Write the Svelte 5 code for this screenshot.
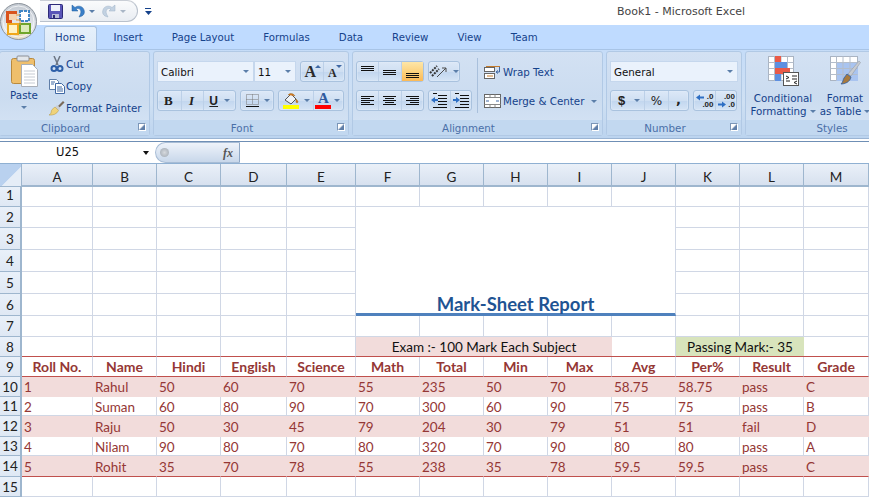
<script>
	const tabs = ['Home', 'Insert', 'Page Layout', 'Formulas', 'Data', 'Review', 'View', 'Team'];
	const columns = ['A', 'B', 'C', 'D', 'E', 'F', 'G', 'H', 'I', 'J', 'K', 'L', 'M'];
	const headings = ['Roll No.', 'Name', 'Hindi', 'English', 'Science', 'Math', 'Total', 'Min', 'Max', 'Avg', 'Per%', 'Result', 'Grade'];
	const students = [
		[1, 'Rahul', 50, 60, 70, 55, 235, 50, 70, 58.75, 58.75, 'pass', 'C'],
		[2, 'Suman', 60, 80, 90, 70, 300, 60, 90, 75, 75, 'pass', 'B'],
		[3, 'Raju', 50, 30, 45, 79, 204, 30, 79, 51, 51, 'fail', 'D'],
		[4, 'Nilam', 90, 80, 70, 80, 320, 70, 90, 80, 80, 'pass', 'A'],
		[5, 'Rohit', 35, 70, 78, 55, 238, 35, 78, 59.5, 59.5, 'pass', 'C']
	];
	const blanks = (n) => Array.from({ length: n });

	// x1, x2 for the five lines of each horizontal alignment icon
	const hAlign = [
		[[2, 15], [2, 11], [2, 15], [2, 11], [2, 15]],
		[[2, 15], [4, 13], [2, 15], [4, 13], [2, 15]],
		[[2, 15], [6, 15], [2, 15], [6, 15], [2, 15]]
	];
</script>

{#snippet caret()}
	<i class="caret"></i>
{/snippet}

{#snippet vLines(top)}
	<svg width="17" height="16" viewBox="0 0 17 16">
		{#each [0, 2, 4] as d}
			<path d="M2 {top + d + 0.5}H15" stroke="#111" />
		{/each}
	</svg>
{/snippet}

{#snippet hLines(set)}
	<svg width="17" height="16" viewBox="0 0 17 16">
		{#each set as [a, b], i}
			<path d="M{a} {3.5 + i * 2}H{b}" stroke="#111" />
		{/each}
	</svg>
{/snippet}

<div class="excel">
	<header class="titlebar">
		<svg class="office" width="40" height="40" viewBox="0 0 40 40">
			<defs>
				<radialGradient id="orb" cx="50%" cy="85%" r="75%">
					<stop offset="0" stop-color="#e9d9b4" />
					<stop offset="0.55" stop-color="#e4e8ee" />
					<stop offset="1" stop-color="#c6ccd4" />
				</radialGradient>
			</defs>
			<circle cx="18.5" cy="19.5" r="18" fill="url(#orb)" stroke="#8d949c" />
			<circle cx="18.5" cy="19.5" r="15.5" fill="none" stroke="#fff" stroke-opacity=".7" />
			<path d="M6 9h11v3H9v6h3v3H6z" fill="#d9541e" />
			<path d="M9 12h8v6H9z" fill="#f6d4b0" />
			<rect x="20" y="9" width="9" height="10" fill="#fff" stroke="#3f86c6" stroke-width="2" stroke-dasharray="3 1" />
			<rect x="8" y="22" width="10" height="10" fill="#fff3c4" stroke="#f0a81c" stroke-width="2" />
			<rect x="20" y="22" width="10" height="9" fill="#dcebb8" stroke="#6fa52b" stroke-width="2" />
			<path d="M16 13h4M16 18h4v5" stroke="#e59a3b" fill="none" />
		</svg>
		<div class="qat">
			<svg width="15" height="15" viewBox="0 0 15 15">
				<rect x=".5" y=".5" width="14" height="14" rx="1" fill="#5a55b8" stroke="#2c2a78" />
				<rect x="3" y="1" width="9" height="6" fill="#eef0fa" />
				<rect x="4" y="10" width="7" height="4" fill="#b9bcd8" />
				<rect x="5" y="11" width="2" height="3" fill="#2c2a78" />
			</svg>
			<svg class="undo" width="14" height="14" viewBox="0 0 14 14">
				<path d="M1 1v6h6L5 5c3-1.500 6 .5 4.500 5L8 13c5-1 6-4 5-7C12 2 7 1 4 3.500z" fill="#3a7fc8" stroke="#1f5c9f" stroke-width=".5" />
			</svg>
			{@render caret()}
			<svg class="redo" width="14" height="14" viewBox="0 0 14 14">
				<path d="M13 1v6H7l2-2C6 3.500 3 5.500 4.500 10L6 13C1 12 0 9 1 6c1-4 6-5 9-2.500z" fill="#c3d2e2" stroke="#9db1c7" stroke-width=".5" />
			</svg>
			<i class="caret grey"></i>
		</div>
		<svg class="customize" width="7" height="8" viewBox="0 0 7 8">
			<path d="M0 .5H6" stroke="#15428b" />
			<path d="M0 3h7L3.500 7z" fill="#15428b" />
		</svg>
		<span class="title">Book1 - Microsoft Excel</span>
	</header>

	<nav class="tabs">
		{#each tabs as tab, i}
			<span class="tab" class:active={i === 0}>{tab}</span>
		{/each}
	</nav>

	<div class="ribbon">
		<section class="group clipboard">
			<div class="body clip-body">
				<div class="paste">
					<svg width="28" height="33" viewBox="0 0 28 33">
						<rect x=".5" y="3.500" width="23" height="25" rx="2" fill="#efbf6c" stroke="#b98a3e" />
						<rect x="6" y="1" width="12" height="5" rx="1" fill="#e3e6ea" stroke="#8b8f96" />
						<path d="M10.500 9.500h11l5 5v17h-16z" fill="#fff" stroke="#a9afb8" />
						<path d="M13 16h11M13 19h11M13 22h11M13 25h11M13 28h11" stroke="#c6cbd3" />
					</svg>
					<span>Paste</span>
					{@render caret()}
				</div>
				<div class="small-list">
					<div class="small">
						<svg width="16" height="16" viewBox="0 0 16 16">
							<path d="M5 0l4 9M11 0L7 9" stroke="#6d7684" stroke-width="1.500" fill="none" />
							<circle cx="5" cy="12.500" r="2.500" fill="none" stroke="#2d5fa8" stroke-width="2" />
							<circle cx="11" cy="12.500" r="2.500" fill="none" stroke="#2d5fa8" stroke-width="2" />
						</svg>
						Cut
					</div>
					<div class="small">
						<svg width="16" height="16" viewBox="0 0 16 16">
							<path d="M.5 1.500h7l2 2v8h-9z" fill="#fff" stroke="#5f7ea8" />
							<path d="M6.500 5.500h6l3 3v7h-9z" fill="#fff" stroke="#3f68a4" />
							<path d="M2 4h4M2 6h3M8 9h5M8 11h6M8 13h6" stroke="#3f68a4" />
						</svg>
						Copy
					</div>
					<div class="small">
						<svg width="16" height="16" viewBox="0 0 16 16">
							<path d="M9 6l5-5 1.500 1.500-5 5z" fill="#7a6a58" />
							<path d="M8 5l3.500 3.500-2 2L6 7z" fill="#c9ced6" />
							<path d="M6 7l3.500 3.500C8 14 4 15.500 0 15c2-1 2-2 2.500-4.500C3 9 5 8 6 7z" fill="#f0d37a" stroke="#b2953e" stroke-width=".5" />
						</svg>
						Format Painter
					</div>
				</div>
			</div>
			<footer>Clipboard<i class="launcher"></i></footer>
		</section>

		<section class="group font">
			<div class="body rows">
				<div class="row">
					<div class="combo face"><span>Calibri</span>{@render caret()}</div>
					<div class="combo size"><span>11</span>{@render caret()}</div>
					<div class="btns grow">
						<span class="btn letter big">A<i class="up"></i></span>
						<span class="btn letter little">A<i class="down"></i></span>
					</div>
				</div>
				<div class="row">
					<div class="btns biu">
						<span class="btn serif">B</span>
						<span class="btn serif ital">I</span>
						<span class="btn serif under">U{@render caret()}</span>
					</div>
					<div class="btns borders">
						<span class="btn">
							<svg width="15" height="15" viewBox="0 0 15 15">
								<path d="M1.500 1.500h12v10h-12zM7.500 1.500v10M1.500 6.500h12" fill="none" stroke="#777" stroke-dasharray="1 1" />
								<path d="M1 13.500h13" stroke="#111" />
							</svg>
							{@render caret()}
						</span>
					</div>
					<div class="btns colours">
						<span class="btn fill">
							<svg width="16" height="12" viewBox="0 0 16 12">
								<path d="M2 7l6-6 5 5-5 5z" fill="#eef2f7" stroke="#555" />
								<path d="M5 2c2-2 5-2 7 1M13 6c1 1 2 2 2 3s-2 1-2 0z" fill="#d6791f" stroke="#8f6a2a" stroke-width=".5" />
							</svg>
							<b class="swatch yellow"></b>
							{@render caret()}
						</span>
						<span class="btn colour">
							<span class="letter a">A</span>
							<b class="swatch red"></b>
							{@render caret()}
						</span>
					</div>
				</div>
			</div>
			<footer>Font<i class="launcher"></i></footer>
		</section>

		<section class="group align">
			<div class="body align-body">
				<div class="rows">
					<div class="row">
						<div class="btns cells">
							<span class="btn cell">{@render vLines(2)}</span>
							<span class="btn cell">{@render vLines(6)}</span>
							<span class="btn cell on">{@render vLines(9)}</span>
						</div>
						<div class="btns">
							<span class="btn orient">
								<svg width="20" height="16" viewBox="0 0 20 16">
									<path d="M1 9l7-7M3 12l7-7" stroke="#333" stroke-width="2" stroke-dasharray="2 1" />
									<path d="M8 13l9-9M13 4h4v4" stroke="#4d4d4d" fill="none" />
								</svg>
								{@render caret()}
							</span>
						</div>
					</div>
					<div class="row">
						<div class="btns cells">
							{#each hAlign as set}
								<span class="btn cell">{@render hLines(set)}</span>
							{/each}
						</div>
						<div class="btns indents">
							<span class="btn indent">
								<svg width="18" height="16" viewBox="0 0 18 16">
									<path d="M8 2.500h9M8 5.500h9M8 8.500h9M8 11.500h9M3 .5h4M3 14.500h14" stroke="#111" />
									<path d="M1 7l4-3v2h3v2H5v2z" fill="#2e6fc4" />
								</svg>
							</span>
							<span class="btn indent">
								<svg width="18" height="16" viewBox="0 0 18 16">
									<path d="M8 2.500h9M8 5.500h9M8 8.500h9M8 11.500h9M3 .5h4M3 14.500h14" stroke="#111" />
									<path d="M8 7L4 4v2H1v2h3v2z" fill="#2e6fc4" />
								</svg>
							</span>
						</div>
					</div>
				</div>
				<div class="sep"></div>
				<div class="wrap-list">
					<div class="small">
						<svg width="17" height="16" viewBox="0 0 17 16">
							<rect x=".5" y="3.500" width="10" height="4" fill="#fff" stroke="#666" />
							<rect x=".5" y="9.500" width="10" height="5" fill="#fff" stroke="#666" />
							<path d="M2 2.500h14" stroke="#c57b2b" />
							<path d="M3 12h6" stroke="#c57b2b" />
							<path d="M15.500 3v5h-3M14 6.500l-2 1.500 2 1.500" fill="none" stroke="#3f68a4" />
						</svg>
						Wrap Text
					</div>
					<div class="small">
						<svg width="17" height="16" viewBox="0 0 17 16">
							<rect x=".5" y="1.500" width="16" height="13" fill="#fff" stroke="#666" />
							<path d="M.5 4.500h16M.5 11.500h16M6 1.500v3M11 1.500v3M6 11.500v3M11 11.500v3" stroke="#888" />
							<path d="M2 8h3M15 8h-3" stroke="#3f68a4" />
						</svg>
						Merge &amp; Center{@render caret()}
					</div>
				</div>
			</div>
			<footer>Alignment<i class="launcher"></i></footer>
		</section>

		<section class="group number">
			<div class="body rows">
				<div class="row">
					<div class="combo general"><span>General</span>{@render caret()}</div>
				</div>
				<div class="row">
					<div class="btns money">
						<span class="btn dollar">${@render caret()}</span>
						<span class="btn percent">%</span>
						<span class="btn comma">,</span>
					</div>
					<div class="btns decs">
						<span class="btn dec">
							<svg width="21" height="16" viewBox="0 0 21 16">
								<path d="M1 4.500l4-3v2h4v2H5v2z" fill="#2e6fc4" />
							</svg>
							<span class="digits"><em>.0</em><em>.00</em></span>
						</span>
						<span class="btn dec">
							<svg width="21" height="16" viewBox="0 0 21 16">
								<path d="M9 11.500l-4-3v2H1v2h4v2z" fill="#2e6fc4" />
							</svg>
							<span class="digits"><em>.00</em><em>.0</em></span>
						</span>
					</div>
				</div>
			</div>
			<footer>Number<i class="launcher"></i></footer>
		</section>

		<section class="group styles">
			<div class="body style-body">
				<div class="big-btn">
					<svg width="31" height="30" viewBox="0 0 31 30">
						<rect x=".5" y=".5" width="25" height="24" fill="#fff" stroke="#aab4c2" />
						<path d="M.5 6.500h25M.5 12.500h25M.5 18.500h25M6.500 .5v24M13 .5v24M19.500 .5v24" stroke="#b4bdca" />
						<rect x="7" y="0" width="6" height="6" fill="#ea5a48" />
						<rect x="7" y="6" width="12" height="6" fill="#5d8fe0" />
						<rect x="7" y="12" width="15" height="6" fill="#ea5a48" />
						<rect x="7" y="18" width="6" height="7" fill="#5d8fe0" />
						<rect x="15.500" y="16.500" width="15" height="13" fill="#fff" stroke="#555" />
						<path d="M18 20l3 1.500-3 1.500M18 25h4M24 20h5M24 23h5M29 25l-3 1.500 3 1.500" fill="none" stroke="#222" />
					</svg>
					<span>Conditional</span>
					<span>Formatting{@render caret()}</span>
				</div>
				<div class="big-btn">
					<svg width="31" height="30" viewBox="0 0 31 30">
						<rect x=".5" y=".5" width="27" height="24" fill="#fff" stroke="#aab4c2" />
						<rect x="6" y="6" width="22" height="19" fill="#a9c4f0" />
						<path d="M.5 6.500h27M.5 12.500h27M.5 18.500h27M6.500 .5v24M13 .5v24M20 .5v24" stroke="#b4bdca" />
						<path d="M18 18L29 5l1.500 1.500L21 20z" fill="#c7cbd1" stroke="#8f949b" stroke-width=".5" />
						<path d="M17 18l4 3c-1 5-6 7-10 7 2-2 2-4 3-6 1-1 2-3 3-4z" fill="#a87a3e" stroke="#2d5fa8" stroke-width=".8" />
					</svg>
					<span>Format</span>
					<span>as Table{@render caret()}</span>
				</div>
			</div>
			<footer>Styles</footer>
		</section>
	</div>

	<div class="formula">
		<div class="namebox"><span>U25</span><i class="down-arrow"></i></div>
		<div class="fx-pill"><i class="knob"></i><em>fx</em></div>
		<div class="input"></div>
	</div>

	<div class="sheet">
		<div class="corner"></div>
		{#each columns as col}
			<div class="colhead">{col}</div>
		{/each}

		<div class="rowhead r1">1</div>
		{#each blanks(13) as _}<div class="c"></div>{/each}

		<div class="rowhead">2</div>
		{#each blanks(5) as _}<div class="c"></div>{/each}
		<div class="c report"><span>Mark-Sheet Report</span></div>
		{#each blanks(3) as _}<div class="c"></div>{/each}

		{#each [3, 4, 5, 6] as n}
			<div class="rowhead">{n}</div>
			{#each blanks(5) as _}<div class="c"></div>{/each}
			{#each blanks(3) as _}<div class="c"></div>{/each}
		{/each}

		<div class="rowhead">7</div>
		{#each blanks(13) as _}<div class="c"></div>{/each}

		<div class="rowhead">8</div>
		{#each blanks(5) as _}<div class="c red-bottom"></div>{/each}
		<div class="c red-bottom exam">Exam :- 100 Mark Each Subject</div>
		<div class="c red-bottom"></div>
		<div class="c red-bottom passing">Passing Mark:- 35</div>
		<div class="c red-bottom"></div>

		<div class="rowhead">9</div>
		{#each headings as h}
			<div class="c heading">{h}</div>
		{/each}

		{#each students as student, i}
			<div class="rowhead">{i + 10}</div>
			{#each student as value}
				<div class="c data" class:pink={i % 2 === 0} class:red-bottom={i === 4}>{value}</div>
			{/each}
		{/each}

		<div class="rowhead">15</div>
		{#each blanks(13) as _}<div class="c"></div>{/each}
	</div>
</div>

<style>
	:global(body) {
		margin: 0;
		overflow: hidden;
	}
	.excel {
		width: 869px;
		height: 497px;
		overflow: hidden;
		background: #fff;
		font-family: "DejaVu Sans", sans-serif;
		font-size: 10.3px;
		color: #15428b;
	}

	/* title bar */
	.titlebar {
		position: relative;
		height: 25px;
		display: flex;
		align-items: flex-start;
		background: #fff;
	}
	.office {
		position: absolute;
		left: 0;
		top: 2px;
		z-index: 2;
	}
	.qat {
		height: 22px;
		width: 98px;
		margin-left: 40px;
		padding-left: 8px;
		box-sizing: border-box;
		display: flex;
		align-items: center;
		border: 1px solid #b9c1cc;
		border-top-color: #c9ced6;
		border-left: none;
		border-radius: 0 12px 12px 0;
		background: linear-gradient(#fafbfc, #e9edf2);
	}
	.qat .undo {
		margin-left: 8px;
	}
	.qat .redo {
		margin-left: 7px;
	}
	.qat .caret {
		margin-left: 4px;
	}
	.customize {
		margin: 8px 0 0 7px;
	}
	.title {
		margin-left: auto;
		padding: 5px 124px 0 0;
		color: #444;
		font-size: 11px;
		white-space: nowrap;
	}
	.caret {
		display: inline-block;
		flex: none;
		width: 0;
		height: 0;
		border: 3px solid transparent;
		border-top: 3px solid #5b7ea9;
		border-bottom: none;
	}
	.caret.grey {
		border-top-color: #a9b6c6;
	}

	/* tabs */
	.tabs {
		height: 24px;
		padding-left: 44px;
		display: flex;
		background: #bfdbff;
		font-size: 10.2px;
	}
	.tab {
		padding: 7px 14.5px 0;
		white-space: nowrap;
	}
	.tab.active {
		position: relative;
		top: 1px;
		width: 53px;
		height: 25px;
		box-sizing: border-box;
		padding: 5px 0 0 10px;
		margin-right: 2px;
		background: linear-gradient(#e6f0fb, #dce9f7);
		border: 1px solid #a6c0df;
		border-bottom: none;
		border-radius: 3px 3px 0 0;
	}

	/* ribbon */
	.ribbon {
		height: 90px;
		box-sizing: border-box;
		padding-top: 2px;
		display: flex;
		gap: 3px;
		overflow: hidden;
		background: linear-gradient(#c5dcf8, #cfe0f3 60%, #bcd4ef);
		border-bottom: 1px solid #9ab4d3;
		box-shadow: inset 0 1px 0 #a8c4e6;
	}
	.group {
		flex: none;
		height: 85px;
		box-sizing: border-box;
		border: 1px solid #b1c9e5;
		border-radius: 3px;
		display: flex;
		flex-direction: column;
		background: linear-gradient(#d3e1f3, #cbdcf0 55%, #d6e4f5);
	}
	.group footer {
		position: relative;
		flex: none;
		height: 15px;
		line-height: 17px;
		padding-right: 18px;
		text-align: center;
		background: #c2d8f0;
		color: #4a6fa8;
	}
	.styles footer {
		padding-right: 0;
	}
	.launcher {
		position: absolute;
		right: 3px;
		top: 3px;
		width: 6px;
		height: 6px;
		border: 1px solid #7b96b8;
		border-right-color: #fff;
		border-bottom-color: #fff;
		background: linear-gradient(135deg, #fff 40%, #5f7ea8 60%);
	}
	.body {
		flex: 1;
		min-height: 0;
		box-sizing: border-box;
	}
	.clipboard {
		width: 151px;
		margin-left: -1px;
	}
	.font {
		width: 196px;
	}
	.align {
		width: 251px;
	}
	.number {
		width: 136px;
	}
	.styles {
		width: 174px;
	}
	.clip-body {
		display: flex;
	}
	.paste {
		width: 50px;
		padding-top: 3px;
		box-sizing: border-box;
		display: flex;
		flex-direction: column;
		align-items: center;
		gap: 1px;
		margin-left: -1px;
	}
	.paste .caret {
		margin-top: 4px;
	}
	.paste svg {
		margin-left: 2px;
	}
	.small-list {
		padding-top: 1px;
		display: flex;
		flex-direction: column;
	}
	.small {
		height: 22px;
		display: flex;
		align-items: center;
		gap: 1px;
		white-space: nowrap;
	}
	.small .caret {
		margin-left: 5px;
	}
	.rows {
		padding: 9px 0 0 3px;
		display: flex;
		flex-direction: column;
		gap: 8px;
	}
	.row {
		height: 21px;
		display: flex;
		gap: 4px;
	}
	.combo {
		box-sizing: border-box;
		height: 21px;
		padding: 0 4px 0 3px;
		display: flex;
		align-items: center;
		justify-content: space-between;
		background: #eaf2fc;
		border: 1px solid #c5d7ed;
		color: #111;
	}
	.face {
		width: 97px;
	}
	.size {
		width: 42px;
		margin-left: -4px;
	}
	.general {
		width: 128px;
	}
	.btns {
		flex: none;
		height: 21px;
		box-sizing: border-box;
		display: flex;
		border: 1px solid #a9c2de;
		border-radius: 3px;
		background: linear-gradient(#dce8f7, #cfdff2 50%, #c3d7ef 55%, #d5e4f5);
		box-shadow: inset 0 0 0 1px #e4eefa66;
	}
	.btn {
		position: relative;
		display: flex;
		align-items: center;
		justify-content: center;
		border-left: 1px solid #bcd0e8;
		color: #222;
		box-sizing: border-box;
	}
	.btn:first-child {
		border-left: none;
	}
	.btn .caret {
		margin-left: 4px;
	}
	.grow {
		width: 45px;
	}
	.letter {
		font-family: "Liberation Serif", serif;
		font-weight: 700;
		color: #2b2b2b;
	}
	.big {
		width: 23px;
		font-size: 16px;
		padding-right: 4px;
	}
	.little {
		width: 21px;
		font-size: 12px;
		padding: 3px 4px 0 0;
	}
	.up,
	.down {
		position: absolute;
		right: 2px;
		top: 3px;
		border: 3px solid transparent;
		border-top: none;
		border-bottom: 3px solid #3f68a4;
	}
	.down {
		border-bottom: none;
		border-top: 3px solid #3f68a4;
	}
	.biu {
		width: 79px;
	}
	.serif {
		font-family: "Liberation Serif", serif;
		font-weight: 700;
		font-size: 13px;
		color: #222;
		width: 23px;
		padding-right: 2px;
	}
	.ital {
		font-style: italic;
	}
	.under {
		width: 32px;
		padding-right: 0;
		text-decoration: underline;
		font-family: "Liberation Sans", sans-serif;
		font-size: 12px;
	}
	.under .caret {
		margin-left: 6px;
	}
	.borders {
		width: 34px;
	}
	.borders .btn {
		width: 100%;
	}
	.colours {
		width: 66px;
	}
	.fill {
		width: 35px;
		padding-right: 10px;
		flex-direction: column;
	}
	.colour {
		width: 31px;
		padding-right: 10px;
		flex-direction: column;
	}
	.fill .caret,
	.colour .caret {
		position: absolute;
		right: 3px;
		top: 8px;
	}
	.a {
		font-size: 15px;
		line-height: 13px;
		color: #2f5a9e;
	}
	.swatch {
		display: block;
		flex: none;
		width: 16px;
		height: 4px;
	}
	.yellow {
		background: #ffff00;
	}
	.red {
		background: #ff0000;
	}
	.align-body {
		display: flex;
	}
	.cells {
		width: 68px;
	}
	.cell {
		flex: 1;
		min-width: 0;
	}
	.cell.on {
		background: linear-gradient(#fde6a8, #fcd27e 50%, #fbb956);
	}
	.orient {
		width: 30px;
	}
	.indents {
		width: 44px;
	}
	.indent {
		flex: 1;
	}
	.sep {
		flex: none;
		width: 1px;
		height: 55px;
		margin: 6px 6px 0 5px;
		background: #a9c0dc;
	}
	.wrap-list {
		padding-top: 9px;
		display: flex;
		flex-direction: column;
		gap: 7px;
	}
	.wrap-list .small {
		gap: 2px;
	}
	.money {
		width: 79px;
	}
	.dollar {
		width: 33px;
		font-weight: 700;
		font-size: 13px;
		font-family: "Liberation Sans", sans-serif;
		justify-content: flex-start;
		padding-left: 7px;
	}
	.dollar .caret {
		margin-left: 9px;
	}
	.percent {
		width: 24px;
		font-size: 12px;
	}
	.comma {
		flex: 1;
		font-weight: 700;
		font-size: 13px;
		padding-bottom: 3px;
	}
	.decs {
		width: 44px;
	}
	.dec {
		flex: 1;
		overflow: hidden;
	}
	.dec svg {
		position: absolute;
		left: 1px;
		top: 2px;
	}
	.digits {
		position: absolute;
		right: 1px;
		top: 2px;
		display: flex;
		flex-direction: column;
		align-items: flex-end;
		font-size: 8px;
		line-height: 8px;
		font-family: "Liberation Sans", sans-serif;
		font-weight: 700;
	}
	.digits em {
		font-style: normal;
	}
	.style-body {
		display: flex;
		padding: 4px 0 0 6px;
	}
	.big-btn {
		display: flex;
		flex-direction: column;
		align-items: center;
		width: 62px;
		line-height: 13px;
		white-space: nowrap;
	}
	.big-btn svg {
		margin-bottom: 6px;
	}
	.big-btn .caret {
		margin-left: 3px;
		vertical-align: 2px;
	}

	/* formula bar */
	.formula {
		height: 23px;
		margin-top: 2px;
		display: flex;
		box-sizing: border-box;
		border-top: 1px solid #6f8fb5;
		border-bottom: 1px solid #8fb0d2;
		color: #111;
		font-size: 11.5px;
		background: #fff;
	}
	.namebox {
		position: relative;
		width: 155px;
		line-height: 21px;
		padding-left: 56px;
		box-sizing: border-box;
	}
	.down-arrow {
		position: absolute;
		right: 6px;
		top: 9px;
		border: 3.5px solid transparent;
		border-top: 4px solid #111;
		border-bottom: none;
	}
	.fx-pill {
		position: relative;
		width: 85px;
		box-sizing: border-box;
		border-radius: 11px 0 0 11px;
		border: 1px solid #a7bcd5;
		border-right-color: #8fa8c6;
		background: linear-gradient(#eef3fa, #c8d7ea);
	}
	.knob {
		position: absolute;
		left: 4px;
		top: 5px;
		width: 9px;
		height: 9px;
		border-radius: 50%;
		background: radial-gradient(#d6d9dd, #9ea7b1);
	}
	.fx-pill em {
		position: absolute;
		right: 6px;
		top: 0;
		font-family: "Liberation Serif", serif;
		font-weight: 700;
		font-size: 12px;
		line-height: 20px;
		color: #555;
	}
	.input {
		flex: 1;
	}

	/* sheet */
	.sheet {
		display: grid;
		grid-template-columns: 22px 71px 64px 64px 66px 69px repeat(7, 64px) 65px;
		grid-template-rows: 23px 20px 21px 22px 22px 22px 22px 21px 20px 20px 20px 19px 21px 19px 21px 20px;
		font-family: Lato, "Liberation Sans", sans-serif;
		font-size: 13.5px;
		color: #111;
	}
	.corner {
		box-sizing: border-box;
		background: linear-gradient(135deg, #b9d1ef 55%, #e5edf7 56%);
		border-right: 1px solid #9eb6ce;
		border-bottom: 1px solid #9eb6ce;
	}
	.colhead {
		display: flex;
		align-items: center;
		justify-content: center;
		background: linear-gradient(#eaf0f8, #d7e1ef);
		border-right: 1px solid #9eb6ce;
		border-bottom: 2px solid #9eb6ce;
		color: #222;
		padding-top: 4px;
	}
	.rowhead {
		display: flex;
		align-items: center;
		justify-content: center;
		background: linear-gradient(#e9f0f9, #dfe8f4);
		border-right: 2px solid #9eb6ce;
		border-bottom: 1px solid #9eb6ce;
		color: #222;
	}
	.r1 {
		padding-bottom: 3px;
	}
	.c {
		box-sizing: border-box;
		border-right: 1px solid #d0d7e5;
		border-bottom: 1px solid #d0d7e5;
		min-width: 0;
		white-space: nowrap;
	}
	.report {
		grid-column: span 5;
		grid-row: span 5;
		display: flex;
		align-items: flex-end;
		justify-content: center;
		border-bottom: 3px solid #4f81bd;
		color: #1f5493;
		font-weight: 700;
		font-size: 18.5px;
		line-height: 18px;
		background: #fff;
	}
	.exam {
		grid-column: span 4;
		background: #f2dcdb;
		text-align: center;
		line-height: 20px;
		border-right: none;
	}
	.passing {
		grid-column: span 2;
		background: #d8e4bc;
		text-align: center;
		line-height: 20px;
		border-right: none;
	}
	.red-bottom {
		border-bottom: 1px solid #c0504d;
	}
	.heading {
		display: flex;
		align-items: center;
		justify-content: center;
		font-size: 14px;
		font-weight: 700;
		color: #953735;
		border-bottom: 1px solid #c0504d;
	}
	.data {
		display: flex;
		align-items: center;
		padding: 1px 0 0 2px;
		color: #953735;
	}
	.pink {
		background: #f2dcdb;
		border-right-color: #f2dcdb;
		border-bottom-color: #f2dcdb;
	}
	.pink.red-bottom {
		border-bottom-color: #c0504d;
	}
</style>
